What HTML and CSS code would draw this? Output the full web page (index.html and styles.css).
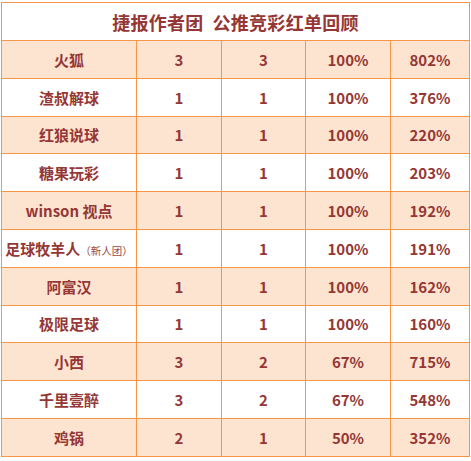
FILE: index.html
```html
<!DOCTYPE html>
<html lang="zh">
<head>
<meta charset="utf-8">
<link rel="stylesheet" href="styles.css">
</head>
<body>
<table class="board">
  <colgroup>
    <col class="c1"><col class="c2"><col class="c3"><col class="c4"><col class="c5">
  </colgroup>
  <tr class="title"><td colspan="5">捷报作者团&nbsp;&nbsp;公推竞彩红单回顾</td></tr>
  <tr class="odd"><td>火狐</td><td>3</td><td>3</td><td>100%</td><td>802%</td></tr>
  <tr><td>渣叔解球</td><td>1</td><td>1</td><td>100%</td><td>376%</td></tr>
  <tr class="odd"><td>红狼说球</td><td>1</td><td>1</td><td>100%</td><td>220%</td></tr>
  <tr><td>糖果玩彩</td><td>1</td><td>1</td><td>100%</td><td>203%</td></tr>
  <tr class="odd"><td>winson 视点</td><td>1</td><td>1</td><td>100%</td><td>192%</td></tr>
  <tr><td>足球牧羊人<span class="note">（新人团）</span></td><td>1</td><td>1</td><td>100%</td><td>191%</td></tr>
  <tr class="odd"><td>阿富汉</td><td>1</td><td>1</td><td>100%</td><td>162%</td></tr>
  <tr><td>极限足球</td><td>1</td><td>1</td><td>100%</td><td>160%</td></tr>
  <tr class="odd"><td>小西</td><td>3</td><td>2</td><td>67%</td><td>715%</td></tr>
  <tr><td>千里壹醉</td><td>3</td><td>2</td><td>67%</td><td>548%</td></tr>
  <tr class="odd"><td>鸡锅</td><td>2</td><td>1</td><td>50%</td><td>352%</td></tr>
</table>
</body>
</html>
```

FILE: styles.css
```css
html, body {
  margin: 0;
  padding: 0;
  background: #ffffff;
}
body {
  padding: 2px 0 0 1px;
  font-family: "Noto Sans CJK SC", "Noto Sans", sans-serif;
}
.board {
  border-collapse: collapse;
  table-layout: fixed;
  width: 468px;
  color: #953735;
}
.c1 { width: 135px; }
.c2 { width: 85px; }
.c3 { width: 84px; }
.c4 { width: 85px; }
.c5 { width: 79px; }
.board td {
  border: 1px solid #f79646;
  text-align: center;
  vertical-align: middle;
  height: 36.8px;
  padding: 0;
  font-size: 15px;
  font-weight: bold;
  line-height: 1;
  white-space: nowrap;
}
.board .title td {
  height: 37px;
  font-size: 18px;
  letter-spacing: 0.3px;
}
.board tr.odd td {
  background: #fde4d1;
}
.note {
  font-size: 10.5px;
  font-weight: normal;
  color: #9a4a48;
}
```
